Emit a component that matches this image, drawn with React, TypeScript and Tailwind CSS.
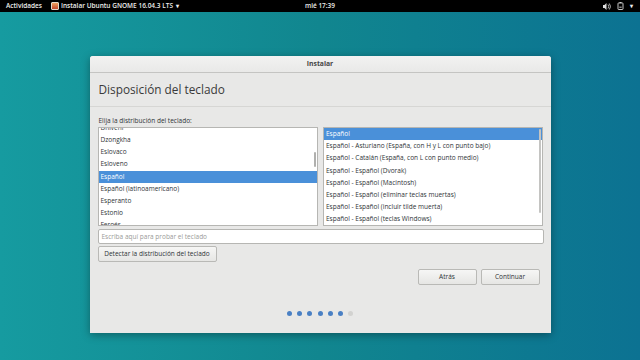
import React from "react";

const left = [
  "Dhivehi",
  "Dzongkha",
  "Eslovaco",
  "Esloveno",
  "Español",
  "Español (latinoamericano)",
  "Esperanto",
  "Estonio",
  "Feroés",
];

const right = [
  "Español",
  "Español - Asturiano (España, con H y L con punto bajo)",
  "Español - Catalán (España, con L con punto medio)",
  "Español - Español (Dvorak)",
  "Español - Español (Macintosh)",
  "Español - Español (eliminar teclas muertas)",
  "Español - Español (incluir tilde muerta)",
  "Español - Español (teclas Windows)",
];

const TopBar = () => (
  <div className="h-[12px] bg-black text-[#eeeeec] text-[6.5px] font-semibold flex items-center px-[6px] relative">
    <span>Actividades</span>
    <span className="ml-[9px] w-[8px] h-[8px] rounded-[1px] bg-gradient-to-b from-[#f0a060] to-[#c0442a] border border-[#e6d9c8]" />
    <span className="ml-[2px]">Instalar Ubuntu GNOME 16.04.3 LTS</span>
    <span className="ml-[3px] text-[6px]">▾</span>
    <span className="absolute left-1/2 -translate-x-1/2">mié 17:39</span>
    <div className="ml-auto flex items-center gap-[6px] pr-[1px]">
      <svg width="8" height="7" viewBox="0 0 8 7" fill="#ddd">
        <path d="M0 2h1.5L3.5 0v7L1.5 5H0z" />
        <path d="M5 1.5q1.5 2 0 4M6.3 0.5q2.5 3 0 6" stroke="#ddd" strokeWidth="0.8" fill="none" />
      </svg>
      <svg width="7" height="8" viewBox="0 0 7 8" fill="none" stroke="#ddd" strokeWidth="0.9">
        <rect x="1" y="1" width="5" height="6.5" rx="0.6" />
        <path d="M2.5 0.5h2" />
        <path d="M2.3 5.2h2.4" />
      </svg>
      <span className="text-[6px]">▾</span>
    </div>
  </div>
);

const Btn = ({ children, w }: { children: React.ReactNode; w: string }) => (
  <div
    className={`${w} h-[16px] flex items-center justify-center rounded-[2px] border border-[#b9b9b6] bg-gradient-to-b from-[#f6f6f5] to-[#e6e6e4] text-[6.5px] text-[#2e3436]`}
  >
    {children}
  </div>
);

const App = () => {
  return (
    <div
      className="w-[640px] h-[360px] overflow-hidden flex flex-col bg-gradient-to-r from-[#169ba0] via-[#11868f] to-[#0c7292]"
      style={{ fontFamily: "'Open Sans', 'Noto Sans', sans-serif" }}
    >
      <TopBar />
      <div className="flex justify-center pt-[44px]">
        <div className="w-[461px] h-[277px] bg-[#e8e8e7] rounded-t-[3px] shadow-[0_2px_8px_rgba(0,0,0,0.35)] flex flex-col text-[#2e3436]">
          <div className="h-[17px] shrink-0 rounded-t-[3px] border-b border-[#c4c4c2] bg-gradient-to-b from-[#f2f2f1] to-[#e9e9e8] flex items-center justify-center text-[6.8px] font-bold text-[#444]">
            Instalar
          </div>
          <div className="h-[34px] shrink-0 border-b border-[#d6d6d4] flex items-center px-[9px] text-[11.8px] text-[#3a3a3a]">
            Disposición del teclado
          </div>
          <div className="flex-1 flex flex-col px-[8px] pt-[7px]">
            <div className="h-[13px] text-[6.5px] leading-[13px] pl-[1px]">Elija la distribución del teclado:</div>
            <div className="flex gap-[5px]">
              <div className="w-[221px] h-[99px] bg-white border border-[#b6b6b3] overflow-hidden relative">
                <div className="-mt-[6.2px]">
                  {left.map((t, i) => (
                    <div
                      key={t}
                      className={`h-[12.2px] leading-[12.2px] text-[6.5px] pl-[2px] ${i === 4 ? "bg-[#4a90d9] text-white" : ""}`}
                    >
                      {t}
                    </div>
                  ))}
                </div>
                <div className="absolute right-[1px] top-[24px] w-[2px] h-[15px] bg-[#b0b0ae] rounded-full" />
              </div>
              <div className="w-[220px] h-[99px] bg-white border border-[#b6b6b3] overflow-hidden relative">
                {right.map((t, i) => (
                  <div
                    key={t}
                    className={`h-[12.2px] leading-[12.2px] text-[6.5px] pl-[2px] ${i === 0 ? "bg-[#4a90d9] text-white" : ""}`}
                  >
                    {t}
                  </div>
                ))}
                <div className="absolute right-[1px] top-[1px] w-[2px] h-[84px] bg-[#c4c4c2] rounded-full" />
              </div>
            </div>
            <div className="mt-[3px] w-[446px] h-[15px] bg-white border border-[#b6b6b3] rounded-[2px] flex items-center pl-[3px] text-[6.5px] text-[#9a9a98]">
              Escriba aquí para probar el teclado
            </div>
            <div className="mt-[2px]">
              <Btn w="w-[119px]">Detectar la distribución del teclado</Btn>
            </div>
            <div className="mt-[7px] flex justify-end gap-[4px] pr-[3px]">
              <Btn w="w-[59px]">Atrás</Btn>
              <Btn w="w-[59px]">Continuar</Btn>
            </div>
            <div className="mt-[26px] flex justify-center gap-[5.3px]">
              {[0, 1, 2, 3, 4, 5, 6].map((i) => (
                <span
                  key={i}
                  className={`w-[5px] h-[5px] rounded-full ${i < 6 ? "bg-[#4a80c4]" : "bg-[#d2d2d0]"}`}
                />
              ))}
            </div>
          </div>
        </div>
      </div>
    </div>
  );
};

export default App;
